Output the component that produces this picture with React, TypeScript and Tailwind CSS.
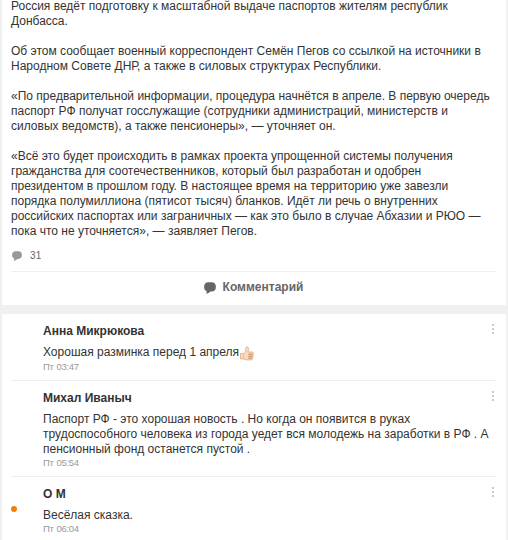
const paragraphs = [
  ["Россия ведёт подготовку к масштабной выдаче паспортов жителям республик", "Донбасса."],
  [
    "Об этом сообщает военный корреспондент Семён Пегов со ссылкой на источники в",
    "Народном Совете ДНР, а также в силовых структурах Республики.",
  ],
  [
    "«По предварительной информации, процедура начнётся в апреле. В первую очередь",
    "паспорт РФ получат госслужащие (сотрудники администраций, министерств и",
    "силовых ведомств), а также пенсионеры», — уточняет он.",
  ],
  [
    "«Всё это будет происходить в рамках проекта упрощенной системы получения",
    "гражданства для соотечественников, который был разработан и одобрен",
    "президентом в прошлом году. В настоящее время на территорию уже завезли",
    "порядка полумиллиона (пятисот тысяч) бланков. Идёт ли речь о внутренних",
    "российских паспортах или заграничных — как это было в случае Абхазии и РЮО —",
    "пока что не уточняется», — заявляет Пегов.",
  ],
];

const comments = [
  { name: "Анна Микрюкова", lines: ["Хорошая разминка перед 1 апреля"], time: "Пт 03:47", thumb: true, online: false },
  {
    name: "Михал Иваныч",
    lines: [
      "Паспорт РФ - это хорошая новость . Но когда он появится в руках",
      "трудоспособного человека из города уедет вся молодежь на заработки в РФ . А",
      "пенсионный фонд останется пустой .",
    ],
    time: "Пт 05:54",
    thumb: false,
    online: false,
  },
  { name: "О М", lines: ["Весёлая сказка."], time: "Пт 06:04", thumb: false, online: true },
];

function Bubble({ className }: { className: string }) {
  return (
    <svg viewBox="0 0 11 11" className={className} fill="currentColor">
      <path d="M4 0.300H7C9.600 0.300 10.900 1.900 10.900 4.500S9.600 8.700 7 8.700H5.800C4.800 9.900 3.500 10.600 1.900 10.700C2.500 9.900 2.500 9.100 2.300 8.300C0.900 7.700 0.100 6.500 0.100 4.500C0.100 1.900 1.400 0.300 4 0.300Z" />
    </svg>
  );
}

function Thumb() {
  return (
    <svg viewBox="0 0 16 16" className="absolute left-full top-px h-[15px] w-4">
      <path
        d="M1 8H4C5.800 7 6.600 5.200 6.700 2.800C6.800 1.500 7.300 0.900 8 0.900C9.400 0.900 9.900 2.500 9.500 4.200L9 6.300H13.300C14.900 6.300 15.200 8 14.200 8.600C15.200 9.200 15.100 10.500 14.100 10.900C14.800 11.500 14.500 12.700 13.600 12.900C14 13.900 13.500 14.800 12.300 14.800H8C6.500 14.800 5.500 14.400 4.500 13.800H1Z"
        fill="#fad9bd"
        stroke="#dca682"
        strokeWidth="0.8"
      />
      <path d="M9.500 8.700H13.800M9.500 10.900H13.800M9.500 12.900H13.300" stroke="#bd7c58" strokeWidth="1" />
      <path d="M4.500 8.500V13.500" stroke="#e6b48f" strokeWidth="0.8" />
    </svg>
  );
}

export default function App() {
  return (
    <div className="h-[540px] w-[508px] overflow-hidden bg-[#f0f0f0] px-0.5 font-['Liberation_Sans',Arial,sans-serif] text-[12px] leading-[15px] text-[#333]">
      {/* Post */}
      <article className="flex h-[305px] flex-col bg-white pl-[9px] pr-[10px]">
        <div className="-mt-px flex flex-col gap-[15px] whitespace-nowrap">
          {paragraphs.map((lines) => (
            <p key={lines[0]}>
              {lines.map((line) => (
                <span key={line} className="block">{line}</span>
              ))}
            </p>
          ))}
        </div>
        <div className="mt-[9px] flex h-[15px] items-center text-[10px] text-[#666]">
          <Bubble className="ml-px h-[10px] w-[10px] text-[#999]" />
          <span className="ml-2 tracking-[0.3px]">31</span>
        </div>
        <div className="mt-2 flex h-8 items-center justify-center border-t border-[#eee] font-bold text-[#666]">
          <Bubble className="mr-[7px] h-[12px] w-[12px]" />
          Комментарий
        </div>
      </article>

      {/* Comments */}
      <section className="mt-[9px] h-[226px] bg-white pl-[9px] pr-[10px]">
        {comments.map((c) => (
          <div key={c.name} className="relative border-b border-[#eee] pb-[7px] pl-8 pt-[10px]">
            <div className="font-bold">{c.name}</div>
            <div className={c.thumb ? "mt-[6px] whitespace-nowrap" : "-mb-px mt-[6px] whitespace-nowrap"}>
              {c.lines.map((line) => (
                <span key={line} className="relative block w-max">
                  {line}
                  {c.thumb && <Thumb />}
                </span>
              ))}
            </div>
            <div className="h-[13px] text-[9.5px] leading-[13px] tracking-[-0.3px] [word-spacing:0.5px] text-[#999]">{c.time}</div>
            <div className="absolute right-[2px] top-[10px] flex flex-col gap-0.5">
              <i className="h-0.5 w-0.5 bg-[#ccc]" />
              <i className="h-0.5 w-0.5 bg-[#ccc]" />
              <i className="h-0.5 w-0.5 bg-[#ccc]" />
            </div>
            {c.online && <span className="absolute left-0 top-[29px] h-1.5 w-1.5 rounded-full bg-[#ee8208]" />}
          </div>
        ))}
      </section>
    </div>
  );
}
